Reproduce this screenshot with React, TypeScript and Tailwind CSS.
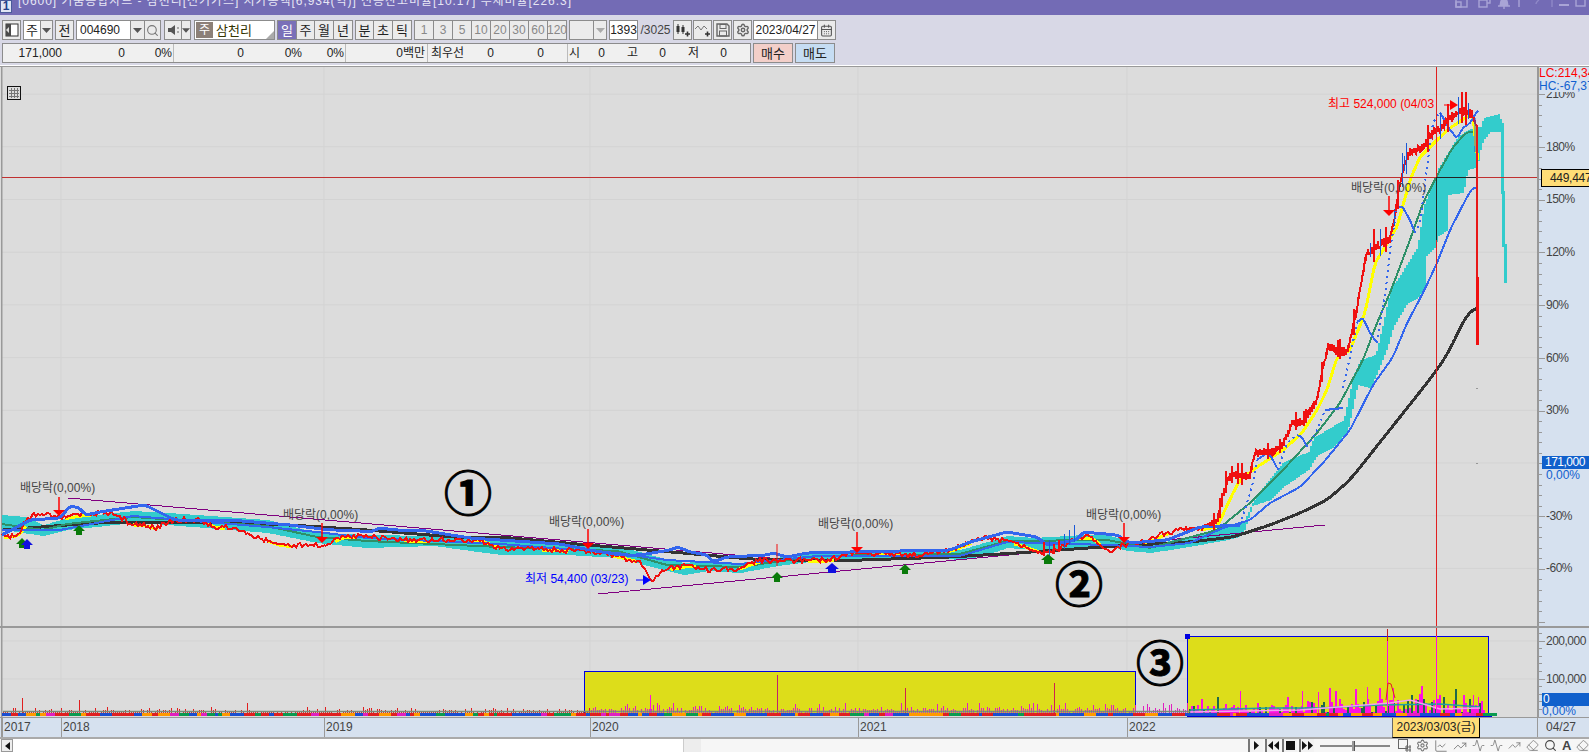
import type { ReactNode } from "react";
import { Search, Settings, LineChart, TrendingUp, Activity, Eraser, CalendarDays } from "lucide-react";

type P = [number, number];

const rnd = (i: number) => {
  const s = Math.sin(i * 12.9898) * 43758.5453;
  return s - Math.floor(s);
};

const at = (pts: P[], x: number) => {
  if (x <= pts[0][0]) return pts[0][1];
  for (let i = 1; i < pts.length; i++) {
    if (x <= pts[i][0]) {
      const [x0, y0] = pts[i - 1];
      const [x1, y1] = pts[i];
      return y0 + ((y1 - y0) * (x - x0)) / (x1 - x0 || 1);
    }
  }
  return pts[pts.length - 1][1];
};

const line = (pts: P[]) => pts.map((p) => p.join(",")).join(" ");

// resample key points and round the corners off
const smooth = (pts: P[], win = 4) => {
  const out: P[] = [];
  const last = pts[pts.length - 1][0];
  for (let x = pts[0][0]; x <= last; x += 2) {
    let sum = 0;
    for (let k = -win; k <= win; k++) sum += at(pts, Math.min(last, x + k));
    out.push([x, sum / (win * 2 + 1)]);
  }
  return out;
};

const priceKeys: P[] = [
  [2, 536], [12, 536], [20, 532], [25, 522], [35, 514], [50, 515], [60, 518], [80, 515], [100, 513], [115, 515], [125, 520], [130, 524],
  [145, 525], [155, 528], [175, 520], [200, 520], [215, 527], [230, 527], [245, 532], [265, 540], [280, 545], [300, 545], [325, 545],
  [340, 537], [370, 535], [380, 538], [400, 540], [420, 540], [480, 540], [500, 548], [590, 551], [610, 555], [625, 558], [640, 562],
  [650, 578], [652, 580], [660, 572], [670, 568], [690, 565], [710, 570], [735, 569], [760, 560], [780, 562], [800, 560], [830, 560],
  [850, 553], [880, 554], [920, 555], [950, 550], [970, 542], [985, 537], [1000, 540], [1020, 545], [1040, 552], [1050, 552], [1060, 548],
  [1075, 537], [1090, 537], [1100, 545], [1110, 550], [1120, 546], [1150, 540], [1165, 533], [1180, 530], [1200, 528], [1217, 522],
  [1227, 480], [1233, 475], [1250, 477], [1255, 453], [1273, 452], [1283, 445], [1292, 423], [1302, 423], [1317, 402], [1320, 383],
  [1328, 347], [1347, 353], [1355, 320], [1360, 290], [1367, 253], [1383, 243], [1390, 240], [1397, 203], [1403, 167], [1410, 153],
  [1423, 148], [1433, 133], [1442, 127], [1450, 118], [1463, 110], [1473, 115], [1476, 130],
];

const price: P[] = [];
for (let x = 2; x <= 1476; x += 2) {
  price.push([x, at(priceKeys, x) + (rnd(x) - 0.5) * (x > 1210 ? 8 : 5)]);
}

const yellowLeft = smooth(priceKeys.filter((p) => p[0] < 1205).map((p): P => [p[0] + 2, p[1] + 1]), 3);
const yellowRight = smooth([
  [1200, 530], [1217, 527], [1233, 493], [1240, 480], [1257, 467], [1283, 450], [1302, 433], [1317, 410], [1327, 390], [1337, 357], [1350, 350],
  [1365, 313], [1375, 263], [1385, 247], [1397, 227], [1410, 180], [1420, 157], [1437, 140], [1450, 128], [1473, 113], [1478, 167],
], 2);

const bandTop: P[] = [
  [2, 517], [25, 519], [43, 527], [67, 520], [133, 513], [167, 515], [267, 522], [317, 535], [367, 537], [433, 538], [500, 543], [567, 547],
  [617, 548], [667, 562], [683, 565], [707, 563], [740, 565], [777, 560], [817, 553], [933, 552], [960, 552], [983, 545], [1007, 538],
  [1033, 540], [1083, 537], [1107, 537], [1127, 543], [1150, 547], [1183, 540], [1227, 528], [1243, 523], [1252, 503], [1263, 487],
  [1283, 462], [1308, 452], [1313, 438], [1343, 420], [1353, 375], [1360, 360], [1375, 355], [1383, 322], [1390, 288], [1397, 280],
  [1417, 247], [1423, 207], [1437, 170], [1457, 137], [1467, 130], [1480, 127], [1483, 118], [1498, 114], [1502, 123],
];
const bandBottom: P[] = [
  [2, 527], [43, 533], [67, 527], [133, 520], [167, 522], [267, 530], [317, 540], [367, 545], [433, 543], [500, 552], [567, 552], [617, 555],
  [667, 568], [683, 572], [707, 568], [740, 570], [777, 563], [817, 558], [933, 555], [960, 557], [983, 553], [1007, 545], [1033, 547],
  [1083, 547], [1107, 543], [1127, 548], [1150, 550], [1183, 545], [1227, 537], [1243, 533], [1252, 506], [1270, 500], [1283, 487],
  [1308, 470], [1317, 455], [1333, 447], [1347, 432], [1357, 385], [1370, 388], [1375, 377], [1387, 347], [1393, 327], [1407, 303],
  [1417, 298], [1425, 287], [1425, 257], [1435, 247], [1437, 237], [1447, 230], [1448, 195], [1463, 193], [1467, 170], [1477, 167],
  [1480, 150], [1483, 140], [1490, 132], [1502, 132],
];

const stepped = (pts: P[], grow: number) => {
  const out: P[] = [];
  for (let x = 2; x < 1502; x += 2) {
    const y = Math.round(at(pts, x)) + (x < 1240 ? grow : 0);
    out.push([x, y], [x + 2, y]);
  }
  return out;
};

const cloud = [...stepped(bandTop, -2), ...stepped(bandBottom, 3).reverse()];

const greenKeys = smooth([
  [2, 524], [43, 530], [67, 524], [133, 517], [267, 526], [317, 537], [367, 541], [500, 547], [617, 551], [667, 565], [740, 567], [817, 556],
  [960, 554], [1007, 541], [1107, 540], [1150, 548], [1217, 530], [1250, 503], [1283, 470], [1317, 433], [1340, 403], [1363, 360],
  [1377, 323], [1390, 293], [1410, 240], [1423, 203], [1440, 170], [1453, 147], [1467, 132], [1477, 132],
], 3);

const blueLow = smooth([
  [2, 530], [60, 530], [133, 516], [267, 527], [317, 532], [367, 538], [500, 544], [617, 553], [667, 560], [740, 564], [817, 556], [960, 556],
  [1007, 542], [1107, 545], [1150, 547], [1190, 543], [1223, 528], [1250, 520], [1270, 503], [1300, 487], [1323, 463], [1350, 430], [1373, 385],
  [1393, 357], [1407, 323], [1423, 293], [1437, 263], [1450, 230], [1467, 197], [1473, 187], [1478, 188],
], 3);

const blackKeys = smooth([
  [3, 530], [67, 525], [113, 522], [167, 522], [233, 523], [290, 525], [367, 530], [467, 538], [500, 537], [588, 545], [683, 553], [750, 559],
  [833, 561], [950, 557], [1017, 553], [1117, 546], [1190, 542], [1233, 537], [1270, 525], [1300, 513], [1327, 500], [1350, 480], [1423, 388],
  [1437, 370], [1450, 350], [1467, 313], [1478, 307],
], 8);

const blueTop = smooth([
  [2, 535], [30, 520], [60, 518], [70, 506], [80, 508], [85, 515], [100, 512], [125, 508], [145, 505], [165, 515], [175, 520], [230, 520], [290, 525],
  [330, 530], [350, 530], [370, 532], [380, 528], [395, 530], [420, 530], [470, 538], [500, 540], [560, 544], [590, 550], [620, 555], [640, 555],
  [670, 550], [678, 547], [690, 552], [707, 555], [713, 562], [727, 557], [767, 555], [773, 553], [787, 557], [807, 553], [850, 552], [950, 550],
  [970, 542], [1007, 532], [1037, 537], [1047, 545], [1077, 540], [1083, 532], [1117, 535], [1130, 543], [1167, 540], [1200, 527], [1240, 525],
], 3);
const blueDots: P[][] = [
  [[1240, 525], [1252, 487], [1257, 460]],
  [[1278, 470], [1287, 443], [1297, 435]],
  [[1307, 447], [1317, 430], [1325, 410]],
  [[1343, 388], [1350, 357], [1357, 322]],
  [[1377, 343], [1382, 313], [1387, 280], [1390, 250], [1397, 208]],
  [[1415, 233], [1420, 223], [1427, 167], [1433, 123], [1440, 112]],
];
const blueArcs: P[][] = [
  [[1257, 460], [1267, 453], [1272, 458], [1278, 470]],
  [[1297, 435], [1302, 437], [1307, 447]],
  [[1325, 410], [1343, 408]],
  [[1357, 322], [1363, 318], [1370, 333], [1377, 343]],
  [[1397, 208], [1402, 206], [1410, 220], [1415, 233]],
  [[1440, 112], [1450, 130], [1457, 138], [1463, 128], [1470, 123], [1478, 110]],
];

const PURPLE = "#800080";

const spikes: { x: number; a: number; b: number; c: string }[] = [];
for (let x = 1210; x < 1476; x += 2) {
  const y = at(priceKeys, x);
  const big = rnd(x + 11) > 0.78;
  const h = big ? 8 + rnd(x + 7) * (x > 1340 ? 12 : 6) : 2 + rnd(x + 7) * 3;
  spikes.push({ x, a: y - h, b: y + h * 0.7, c: big && x > 1340 && rnd(x) > 0.45 ? "#1a58d8" : "#f01010" });
}
for (let x = 1044; x < 1075; x += 5) {
  const y = at(priceKeys, x);
  spikes.push({ x, a: y - 6 - rnd(x) * 8, b: y + 4, c: rnd(x) > 0.6 ? "#1a58d8" : "#f01010" });
}

const yearLines = [61, 324, 590, 858, 1127];
const pctLevels = [210, 180, 150, 120, 90, 60, 30, 0, -30, -60];
const pctY = (p: number) => 463 - p * 1.7567;

const Arrow = ({ x, y1, y2, color = "#ff0000" }: { x: number; y1: number; y2: number; color?: string }) => (
  <g>
    <line x1={x} y1={y1} x2={x} y2={y2} stroke={color} strokeWidth={1.5} />
    <polygon points={`${x - 6},${y2} ${x + 6},${y2} ${x},${y2 + 6}`} fill={color} />
  </g>
);

const UpMark = ({ x, y, color = "#0a7a0a", w = 5 }: { x: number; y: number; color?: string; w?: number }) => (
  <polygon
    points={`${x},${y - 5} ${x + w + 1},${y + 1} ${x + w - 2},${y + 1} ${x + w - 2},${y + 5} ${x - w + 2},${y + 5} ${x - w + 2},${y + 1} ${x - w - 1},${y + 1}`}
    fill={color}
  />
);

const MainChart = () => (
  <svg className="absolute inset-0" width={1537} height={559} viewBox="0 67 1537 559">
    {pctLevels.map((p) => (
      <line key={p} x1={2} x2={1537} y1={pctY(p)} y2={pctY(p)} stroke="#d3d3d3" />
    ))}
    {yearLines.map((x) => (
      <line key={x} x1={x} x2={x} y1={66} y2={626} stroke="#d3d3d3" />
    ))}
    <rect x={1} y={66} width={1.5} height={560} fill="#999" />

    <polygon points={line(cloud)} fill="#33cccc" shapeRendering="crispEdges" />
    <polyline points="1502,123 1502,192 1503,192 1503,245 1505,245 1505,283" fill="none" stroke="#33cccc" strokeWidth={3} shapeRendering="crispEdges" />

    <g shapeRendering="crispEdges" fill="none">
      <line x1={68} y1={498} x2={770} y2={558} stroke={PURPLE} strokeWidth={1} />
      <line x1={598} y1={594} x2={1325} y2={525} stroke={PURPLE} strokeWidth={1} />

      <polyline points={line(blackKeys)} stroke="#333" strokeWidth={3} />
      <polyline points={line(greenKeys)} stroke="#2e9068" strokeWidth={2} />
      <polyline points={line(yellowLeft)} stroke="#ffff00" strokeWidth={3} strokeDasharray="26 44" />
      <polyline points={line(yellowRight)} stroke="#ffff00" strokeWidth={3} />
      <polyline points={line(blueLow)} stroke="#3366ee" strokeWidth={2} />
      <polyline points={line(price)} stroke="#f01010" strokeWidth={2} />
      <polyline points={line(blueTop)} stroke="#3366ee" strokeWidth={3} />
      {blueArcs.map((a, i) => (
        <polyline key={i} points={line(smooth(a, 1))} stroke="#3366ee" strokeWidth={2} />
      ))}
      {blueDots.map((a, i) => (
        <polyline key={i} points={line(a)} stroke="#3366ee" strokeWidth={2} strokeDasharray="2 4" />
      ))}
    </g>
    {spikes.map((s) => (
      <line key={`${s.x}-${s.a}`} x1={s.x} x2={s.x} y1={s.a} y2={s.b} stroke={s.c} strokeWidth={s.c === "#f01010" ? 2 : 1} shapeRendering="crispEdges" />
    ))}
    <line x1={777} x2={777} y1={544} y2={566} stroke="#f01010" strokeWidth={1} />

    <line x1={1477} x2={1477} y1={125} y2={277} stroke="#e81818" strokeWidth={2} />
    <line x1={1477.5} x2={1477.5} y1={277} y2={345} stroke="#f01010" strokeWidth={3} />
    <line x1={1475} x2={1475} y1={118} y2={152} stroke="#1a58d8" strokeWidth={1} />
    <line x1={1477} x2={1477} y1={388} y2={389} stroke="#555" />
    <line x1={1477} x2={1477} y1={463} y2={464} stroke="#555" />

    <line x1={1436.5} x2={1436.5} y1={66} y2={626} stroke="#e02020" strokeWidth={1} shapeRendering="crispEdges" />
    <line x1={2} x2={1537} y1={177.5} y2={177.5} stroke="#c03030" strokeWidth={1} shapeRendering="crispEdges" />
    <line x1={1437} x2={1476} y1={177.5} y2={177.5} stroke="#222" strokeWidth={1} shapeRendering="crispEdges" />
    <line x1={1436.5} x2={1436.5} y1={177} y2={240} stroke="#222" strokeWidth={1} shapeRendering="crispEdges" />

    <Arrow x={59} y1={497} y2={510} />
    <Arrow x={322} y1={523} y2={537} />
    <Arrow x={588} y1={529} y2={543} />
    <Arrow x={857} y1={532} y2={547} />
    <Arrow x={1124} y1={523} y2={537} />
    <Arrow x={1389} y1={196} y2={210} />

    <UpMark x={22} y={543} />
    <UpMark x={27} y={544} color="#1010e0" />
    <UpMark x={79} y={530} />
    <UpMark x={777} y={577} />
    <UpMark x={832} y={568} color="#1010e0" w={6} />
    <UpMark x={905} y={569} />
    <UpMark x={1048} y={559} w={6} />

    <polygon points="1458,105 1450,100 1450,110" fill="#ff0000" />
    <line x1={1444} x2={1452} y1={105} y2={105} stroke="#ff0000" />
    <polygon points="651,580 643,575 643,585" fill="#0000ff" />
    <line x1={636} x2={645} y1={580} y2={580} stroke="#0000ff" />
  </svg>
);

const volColors = ["#1a4fd0", "#e02020", "#0a9a50", "#ff9900", "#e020c0", "#1a4fd0", "#e02020"];

const VolumeChart = () => {
  const stripes: { x: number; w: number; c: string }[] = [];
  let sx = 2;
  let si = 0;
  while (sx < 1484) {
    const w = 3 + Math.floor(rnd(si + 3) * 12);
    stripes.push({ x: sx, w, c: volColors[Math.floor(rnd(si) * volColors.length)] });
    sx += w;
    si++;
  }
  const bars: { x: number; h: number; c: string }[] = [];
  for (let x = 3; x < 1484; x += 2) {
    const inner = x > 1187;
    const max = inner ? (x > 1300 ? 18 : 11) : x > 590 ? 7 : 4;
    const h = rnd(x * 3) * max * (rnd(x + 1) > 0.7 ? 1.5 : 0.8);
    const c = inner ? (rnd(x + 9) > 0.75 ? "#1f6a4a" : "#ff10e0") : x > 590 ? "#e020c0" : "#e02020";
    bars.push({ x, h, c });
  }
  const tall: [number, number, string][] = [
    [22, 15, "#e02020"], [79, 13, "#e02020"], [247, 10, "#e02020"], [777, 38, "#c02070"], [905, 25, "#d02050"], [1054, 30, "#d02050"],
    [650, 18, "#ff10e0"], [1240, 22, "#ff10e0"], [1302, 22, "#ff10e0"], [1318, 21, "#ff10e0"], [1367, 26, "#ff10e0"], [1393, 25, "#ff10e0"],
    [1473, 18, "#ff10e0"], [1478, 16, "#ff10e0"],
  ];
  return (
    <svg className="absolute inset-0" width={1537} height={89} viewBox="0 628 1537 89">
      <line x1={2} x2={1537} y1={641} y2={641} stroke="#d3d3d3" />
      <line x1={2} x2={1537} y1={679} y2={679} stroke="#d3d3d3" />
      {yearLines.map((x) => (
        <line key={x} x1={x} x2={x} y1={628} y2={717} stroke="#d3d3d3" />
      ))}
      <rect x={1} y={628} width={1.5} height={89} fill="#999" />

      <rect x={584.5} y={671.5} width={551} height={44} fill="#dddd1a" stroke="#0000e0" />
      <rect x={1187.5} y={636.5} width={301} height={80} fill="#dddd1a" stroke="#0000e0" />
      <rect x={1185} y={634} width={5} height={5} fill="#0000e0" />
      <rect x={1486} y={714} width={6} height={4} fill="#0000e0" />

      {bars.map((b) => (
        <rect key={b.x} x={b.x} y={713 - b.h} width={b.x > 1187 ? 2 : 1} height={b.h} fill={b.c} shapeRendering="crispEdges" />
      ))}
      {tall.map(([x, h, c]) => (
        <rect key={x} x={x} y={713 - h} width={1} height={h} fill={c} shapeRendering="crispEdges" />
      ))}
      {stripes.map((s) => (
        <rect key={s.x} x={s.x} y={713} width={s.w} height={3} fill={s.c} shapeRendering="crispEdges" />
      ))}
      <line x1={3} x2={1190} y1={711.5} y2={711.5} stroke="#7a8a7a" strokeWidth={1.5} />
      <polyline points="1190,710 1270,708 1320,708 1380,705 1440,704 1480,707" fill="none" stroke="#20a0a0" strokeWidth={1.5} />
      <polyline points="1190,712 1300,710 1390,703 1410,700 1440,709 1480,708" fill="none" stroke="#f0a0f0" strokeWidth={1.5} />
      <rect x={1387} y={629} width={1} height={12} fill="#c02020" />
      <rect x={1387} y={641} width={1} height={72} fill="#ff10e0" />
      <polyline points="1386,700 1388,683 1391,684 1395,698" fill="none" stroke="#e02020" />
      <rect x={1436} y={628} width={1} height={8} fill="#e02020" />
      <rect x={1436} y={636} width={1} height={77} fill="#ff10e0" />
    </svg>
  );
};

const Badge = ({ className, children }: { className: string; children: string }) => (
  <div className={`absolute text-[48px] leading-[50px] font-bold text-black [-webkit-text-stroke:1px_black] ${className}`}>{children}</div>
);

const AxisLabel = ({ y, children }: { y: number; children: string }) => (
  <div className="absolute left-[7px] text-[12px] leading-[16px] tracking-[-0.5px] whitespace-nowrap text-[#444]" style={{ top: y - 8 }}>
    {children}
  </div>
);

const MainAxis = () => {
  const ticks: number[] = [];
  for (let y = pctY(210) - 21; y < 626; y += 10.55) ticks.push(y);
  return (
    <div className="relative w-[52px] h-full overflow-hidden bg-[#d6e1ef] border-l-2 border-[#999]">
      <svg className="absolute inset-0" width={52} height={559} viewBox="0 67 52 559">
        {ticks.map((y, i) => (
          <line key={y} x1={0} x2={(i + 3) % 5 === 0 ? 6 : 3} y1={Math.round(y) + 0.5} y2={Math.round(y) + 0.5} stroke="#999" />
        ))}
      </svg>
      {pctLevels.map((p) => (
        <AxisLabel key={p} y={pctY(p) - 67}>{`${p}%`}</AxisLabel>
      ))}
      <div className="absolute left-0 top-0 w-full h-[25px] bg-[#d6e1ef] text-[12px] leading-[13px] whitespace-nowrap">
        <div className="text-[#ff0000]">LC:214,34</div>
        <div className="text-[#1060d0]">HC:-67,37</div>
      </div>
      <div className="absolute left-[2px] top-[102px] w-[60px] h-[18px] bg-[#ffdd77] border border-black pl-[8px] text-[12px] leading-[16px] tracking-[-0.3px] text-[#222] whitespace-nowrap">
        449,447
      </div>
      <div className="absolute left-[3px] top-[389px] w-full h-[13px] bg-[#1060cc] pl-[3px] text-[12px] leading-[13px] tracking-[-0.5px] text-white">171,000</div>
      <div className="absolute left-[7px] top-[401px] text-[12px] leading-[14px] text-[#1060d0]">0,00%</div>
    </div>
  );
};

const VolumeAxis = () => {
  const ticks: number[] = [];
  for (let y = 633; y < 717; y += 7.6) ticks.push(y);
  return (
    <div className="relative w-[52px] h-full overflow-hidden bg-[#d6e1ef] border-l-2 border-[#999]">
      <svg className="absolute inset-0" width={52} height={89} viewBox="0 628 52 89">
        {ticks.map((y, i) => (
          <line key={y} x1={0} x2={i % 5 === 1 ? 6 : 3} y1={Math.round(y) + 0.5} y2={Math.round(y) + 0.5} stroke="#999" />
        ))}
      </svg>
      <AxisLabel y={13}>200,000</AxisLabel>
      <AxisLabel y={51}>100,000</AxisLabel>
      <div className="absolute left-[3px] top-[65px] w-full h-[13px] bg-[#1060cc] pl-[1px] text-[12px] leading-[13px] text-white">0</div>
      <div className="absolute left-[3px] top-[77px] text-[12px] leading-[12px] text-[#1060d0]">0,00%</div>
    </div>
  );
};

const DropArrow = ({ light = false }: { light?: boolean }) => (
  <svg width={9} height={5} viewBox="0 0 9 5">
    <polygon points="0,0 9,0 4.5,5" fill={light ? "#aaa" : "#555"} />
  </svg>
);

const Btn = ({ w, children, className = "bg-[#ebebeb] text-[#222]" }: { w: string; children?: ReactNode; className?: string }) => (
  <div className={`${w} h-[20px] shrink-0 flex items-center justify-center border border-[#8c8c8c] text-[12px] leading-none ${className}`}>
    {children}
  </div>
);

const Ko = ({ children }: { children: string }) => <span className="text-[13px]">{children}</span>;

const Toolbar = () => (
  <div className="h-[50px] shrink-0 bg-[#d8d8e6] pl-[2px] pt-[5px] flex flex-col gap-[3px]">
    <div className="flex items-center h-[20px] gap-[1px]">
      <Btn w="w-[19px]">
        <svg width={14} height={14} viewBox="0 0 14 14">
          <rect x={1} y={1} width={12} height={12} fill="#fff" stroke="#333" />
          <rect x={1} y={1} width={5} height={12} fill="#4a4a4a" />
          <polygon points="1,7 4,4 4,10" fill="#ddd" />
        </svg>
      </Btn>
      <div className="flex ml-[1px]">
        <Btn w="w-[18px]" className="bg-white text-[#222]"><Ko>주</Ko></Btn>
        <Btn w="w-[13px]" className="bg-[#ebebeb] -ml-px"><DropArrow /></Btn>
      </div>
      <Btn w="w-[19px]" className="bg-[#ebebeb] text-[#222] ml-[1px]"><Ko>전</Ko></Btn>
      <div className="flex ml-[1px]">
        <Btn w="w-[55px]" className="bg-white text-[#222] justify-start pl-[3px]">004690</Btn>
        <Btn w="w-[15px]" className="bg-[#ebebeb] -ml-px"><DropArrow /></Btn>
        <Btn w="w-[17px]" className="bg-[#ebebeb] -ml-px"><Search size={13} color="#777" strokeWidth={2} /></Btn>
      </div>
      <div className="flex ml-[2px]">
        <Btn w="w-[18px]">
          <svg width={13} height={12} viewBox="0 0 13 12">
            <polygon points="1,4 4,4 8,1 8,11 4,8 1,8" fill="#555" />
            <circle cx={11} cy={4} r={0.8} fill="#555" />
            <circle cx={11} cy={8} r={0.8} fill="#555" />
          </svg>
        </Btn>
        <Btn w="w-[10px]" className="bg-[#ebebeb] -ml-px"><DropArrow /></Btn>
      </div>
      <div className="relative ml-[2px] w-[81px] h-[20px] shrink-0 bg-white border border-[#8c8c8c] flex items-center">
        <div className="w-[17px] h-[16px] ml-[1px] bg-[#8c8078] text-white text-[12px] leading-[16px] text-center">주</div>
        <div className="ml-[3px] text-[13px] leading-none text-[#333300]">삼천리</div>
        <svg className="absolute right-0 bottom-0" width={8} height={8} viewBox="0 0 8 8">
          <polygon points="8,0 8,8 0,8" fill="#aaa" />
        </svg>
      </div>
      <div className="flex ml-[1px]">
        <Btn w="w-[20px]" className="bg-[#7a70b8] text-white"><Ko>일</Ko></Btn>
        <Btn w="w-[19px]" className="bg-[#ebebeb] text-[#222] -ml-px"><Ko>주</Ko></Btn>
        <Btn w="w-[20px]" className="bg-[#ebebeb] text-[#222] -ml-px"><Ko>월</Ko></Btn>
        <Btn w="w-[20px]" className="bg-[#ebebeb] text-[#222] -ml-px"><Ko>년</Ko></Btn>
      </div>
      <div className="flex ml-[1px]">
        <Btn w="w-[19px]" className="bg-[#ebebeb] text-[#222]"><Ko>분</Ko></Btn>
        <Btn w="w-[20px]" className="bg-[#ebebeb] text-[#222] -ml-px"><Ko>초</Ko></Btn>
        <Btn w="w-[20px]" className="bg-[#ebebeb] text-[#222] -ml-px"><Ko>틱</Ko></Btn>
      </div>
      <div className="flex ml-[1px]">
        <Btn w="w-[20px]" className="bg-[#ebebeb] text-[#888]">1</Btn>
        <Btn w="w-[20px]" className="bg-[#ebebeb] text-[#888] -ml-px">3</Btn>
        <Btn w="w-[20px]" className="bg-[#ebebeb] text-[#888] -ml-px">5</Btn>
        <Btn w="w-[20px]" className="bg-[#ebebeb] text-[#888] -ml-px">10</Btn>
        <Btn w="w-[20px]" className="bg-[#ebebeb] text-[#888] -ml-px">20</Btn>
        <Btn w="w-[20px]" className="bg-[#ebebeb] text-[#888] -ml-px">30</Btn>
        <Btn w="w-[20px]" className="bg-[#ebebeb] text-[#888] -ml-px">60</Btn>
        <Btn w="w-[20px]" className="bg-[#ebebeb] text-[#888] -ml-px">120</Btn>
      </div>
      <div className="flex ml-[1px]">
        <Btn w="w-[25px]" className="bg-[#ebebeb]" />
        <Btn w="w-[14px]" className="bg-[#ebebeb] -ml-px"><DropArrow light /></Btn>
      </div>
      <Btn w="w-[29px]" className="bg-white text-[#222] ml-[1px]">1393</Btn>
      <div className="w-[33px] shrink-0 text-[12px] leading-none text-[#444] text-center">/3025</div>
      <div className="flex gap-[1px]">
        <Btn w="w-[19px]">
          <svg width={15} height={13} viewBox="0 0 15 13">
            <path d="M3 0v10M8 1v9" stroke="#333" />
            <rect x={1.5} y={2} width={3} height={6} fill="#333" />
            <rect x={6.5} y={3} width={3} height={5} fill="#333" />
            <path d="M10 10h5M12.5 7.5v5" stroke="#333" strokeWidth={1.6} />
          </svg>
        </Btn>
        <Btn w="w-[19px]">
          <svg width={15} height={13} viewBox="0 0 15 13">
            <path d="M0 5l3-3 3 4 3-4 3 3" fill="none" stroke="#777" />
            <path d="M10 10h5M12.5 7.5v5" stroke="#333" strokeWidth={1.6} />
          </svg>
        </Btn>
        <Btn w="w-[19px]">
          <svg width={14} height={14} viewBox="0 0 14 14">
            <path d="M1 1h10l2 2v10H1z" fill="none" stroke="#666" strokeWidth={1.4} />
            <rect x={4} y={1.5} width={6} height={4} fill="none" stroke="#666" />
            <rect x={3.5} y={8} width={7} height={5} fill="none" stroke="#666" />
          </svg>
        </Btn>
        <Btn w="w-[19px]"><Settings size={14} color="#666" strokeWidth={2.4} /></Btn>
      </div>
      <div className="flex">
        <Btn w="w-[65px]" className="bg-white text-[#222]">2023/04/27</Btn>
        <Btn w="w-[19px]" className="bg-[#ebebeb] -ml-px"><CalendarDays size={13} color="#555" /></Btn>
      </div>
    </div>
    <div className="flex items-center h-[20px] gap-[2px]">
      <div className="w-[749px] h-[20px] shrink-0 flex bg-[#f0f0f0] border border-[#8c8c8c] text-[12px] leading-[18px] text-[#222] text-right">
        <div className="w-[59px]">171,000</div>
        <div className="w-[63px]">0</div>
        <div className="w-[47px]">0%</div>
        <div className="w-[2px] border-r border-[#bbb]" />
        <div className="w-[70px]">0</div>
        <div className="w-[58px]">0%</div>
        <div className="w-[42px]">0%</div>
        <div className="w-[2px] border-r border-[#bbb]" />
        <div className="w-[79px]">0백만</div>
        <div className="w-[3px] border-r border-[#bbb]" />
        <div className="w-[41px] text-left pl-[3px]">최우선</div>
        <div className="w-[25px]">0</div>
        <div className="w-[50px]">0</div>
        <div className="w-[24px] border-r border-[#bbb]" />
        <div className="w-[13px] text-center">시</div>
        <div className="w-[24px]">0</div>
        <div className="w-[33px]">고</div>
        <div className="w-[28px]">0</div>
        <div className="w-[33px]">저</div>
        <div className="w-[28px]">0</div>
      </div>
      <Btn w="w-[40px]" className="bg-[#f3cfc9] text-[#222]"><Ko>매수</Ko></Btn>
      <Btn w="w-[40px]" className="bg-[#c6ddf3] text-[#222]"><Ko>매도</Ko></Btn>
    </div>
  </div>
);

const TitleBar = () => (
  <div className="h-[15px] shrink-0 bg-[#736bb5] overflow-hidden flex items-start">
    <div className="w-[12px] h-[13px] bg-[#dfe4f4] border border-[#4a5a9a] text-[#24408a] text-[12px] leading-[11px] font-bold text-center shrink-0">1</div>
    <div className="ml-[6px] -mt-[7px] text-[12px] leading-[16px] tracking-[0.95px] text-[#e6e6f4] whitespace-nowrap">
      [0600] 키움종합차트 - 삼천리[전기가스] 시가총액[6,934(억)] 신용잔고비율[10.17] 부채비율[226.3]
    </div>
    <div className="ml-auto mr-[2px] -mt-[5px] h-[14px]">
      <svg width={132} height={14} viewBox="0 0 132 14" fill="none" stroke="#a9a4d6" strokeWidth={1.4}>
        <rect x={1} y={2} width={11} height={10} />
        <rect x={1} y={7} width={5} height={5} />
        <rect x={24} y={5} width={8} height={7} />
        <path d="M27 5V2h8v6h-3" />
        <path d="M43 11h12M45 11c1-3 0-7 4-8 4 1 3 5 4 8M49 11v3" fill="#a9a4d6" />
        <path d="M64 3v9M62 3h4" />
        <path d="M78 4c1-3 6-3 6 0 0 2-3 2-3 5" stroke="#8f88c8" />
        <path d="M97 0v12" stroke="#8f88c8" />
        <path d="M104 10h10" strokeWidth={2} />
        <rect x={121} y={3} width={9} height={8} />
      </svg>
    </div>
  </div>
);

const XAxis = () => (
  <div className="h-[20px] shrink-0 flex bg-[#d6e1ef] border-t border-[#999] text-[12px] leading-[19px] text-[#444]">
    <div className="relative w-[1537px] h-full">
      <div className="absolute left-[1px] top-0 w-[60px] h-full border-l-2 border-[#999] pl-[1px]">2017</div>
      <div className="absolute left-[61px] top-0 h-full border-l border-[#999] pl-[1px]">2018</div>
      <div className="absolute left-[324px] top-0 h-full border-l border-[#999] pl-[1px]">2019</div>
      <div className="absolute left-[590px] top-0 h-full border-l border-[#999] pl-[1px]">2020</div>
      <div className="absolute left-[858px] top-0 h-full border-l border-[#999] pl-[1px]">2021</div>
      <div className="absolute left-[1127px] top-0 h-full border-l border-[#999] pl-[1px]">2022</div>
      <div className="absolute left-[1392px] top-0 w-[88px] h-[20px] bg-[#ffdd77] border border-black border-t-0 border-l-[#666] text-center text-[#222] leading-[18px]">
        2023/03/03(금)
      </div>
    </div>
    <div className="flex-1 border-l border-[#999] pl-[8px]">04/27</div>
  </div>
);

const PlayBtn = ({ children }: { children: ReactNode }) => (
  <div className="w-[15px] h-[15px] flex items-center justify-center border-l-2 border-[#777] bg-[#f2f2f2] shrink-0">{children}</div>
);

const BottomBar = () => (
  <div className="h-[15px] shrink-0 flex items-center bg-[#f6f6f6] border-t-2 border-[#aaa] overflow-hidden">
    <div className="w-[12px] h-full ml-[1px] border border-[#999] bg-[#ededed] flex items-center justify-center shrink-0">
      <svg width={5} height={8} viewBox="0 0 5 8">
        <polygon points="5,0 5,8 0,4" fill="#111" />
      </svg>
    </div>
    <div className="w-[670px] h-full bg-white shrink-0" />
    <div className="w-[18px] h-full bg-[#ededed] border-l border-[#ccc] shrink-0" />
    <div className="w-[547px] h-full bg-[#f6f6f6] shrink-0" />
    <div className="flex h-full gap-[2px] items-center">
      <PlayBtn>
        <svg width={7} height={9} viewBox="0 0 7 9"><polygon points="1,0 6,4.5 1,9" fill="#111" /></svg>
      </PlayBtn>
      <PlayBtn>
        <svg width={11} height={9} viewBox="0 0 11 9"><polygon points="5,0 5,9 0,4.5" fill="#111" /><polygon points="11,0 11,9 6,4.5" fill="#111" /></svg>
      </PlayBtn>
      <PlayBtn>
        <svg width={9} height={9} viewBox="0 0 9 9"><rect width={9} height={9} fill="#111" /></svg>
      </PlayBtn>
      <PlayBtn>
        <svg width={11} height={9} viewBox="0 0 11 9"><polygon points="0,0 5,4.5 0,9" fill="#111" /><polygon points="6,0 11,4.5 6,9" fill="#111" /></svg>
      </PlayBtn>
    </div>
    <div className="relative w-[70px] h-[2px] ml-[6px] bg-[#888] shrink-0">
      <div className="absolute left-[32px] -top-[4px] w-[3px] h-[10px] bg-[#999] border-r border-[#555]" />
    </div>
    <div className="flex items-center gap-[5px] ml-[8px] text-[#777] shrink-0">
      <svg width={13} height={13} viewBox="0 0 13 13" fill="none" stroke="#666">
        <rect x={0.5} y={0.5} width={9} height={9} />
        <path d="M7 8h6M7 11h6M9 6v7M12 6v7" />
      </svg>
      <Settings size={13} strokeWidth={2} />
      <LineChart size={14} strokeWidth={1.5} />
      <TrendingUp size={14} strokeWidth={1.5} />
      <Activity size={13} strokeWidth={1.5} />
      <Activity size={13} strokeWidth={1.5} />
      <TrendingUp size={13} strokeWidth={1.5} />
      <Eraser size={13} strokeWidth={1.5} />
      <Search size={13} strokeWidth={2} color="#444" />
      <div className="text-[13px] leading-none font-bold text-[#444]">A</div>
      <Eraser size={13} strokeWidth={1.5} />
    </div>
  </div>
);

const App = () => {
  return (
    <div className="w-[1589px] h-[752px] overflow-hidden flex flex-col bg-[#d8d8e6] font-['Liberation_Sans','Noto_Sans_CJK_KR',sans-serif]">
      <TitleBar />
      <Toolbar />
      <div className="h-[1px] shrink-0 bg-white" />
      <div className="h-[560px] shrink-0 flex border-t border-[#999]">
        <div className="relative w-[1537px] h-full overflow-hidden bg-[#dcdcdc] text-[12px] leading-[16px] whitespace-nowrap text-[#444]">
          <MainChart />
          <svg className="absolute left-[7px] top-[19px]" width={14} height={14} viewBox="0 0 14 14">
            <rect x={0.5} y={0.5} width={13} height={13} fill="#ddd" stroke="#111" />
            <path d="M2 4.5h10M2 7.5h10M2 10.5h10M4.5 2v10M7.5 2v10M10.5 2v10" stroke="#777" />
          </svg>
          <div className="absolute left-[20px] top-[413px]">배당락(0,00%)</div>
          <div className="absolute left-[283px] top-[440px]">배당락(0,00%)</div>
          <div className="absolute left-[549px] top-[447px]">배당락(0,00%)</div>
          <div className="absolute left-[818px] top-[449px]">배당락(0,00%)</div>
          <div className="absolute left-[1086px] top-[440px]">배당락(0,00%)</div>
          <div className="absolute left-[1351px] top-[113px]">배당락(0,00%)</div>
          <div className="absolute left-[1328px] top-[29px] text-[#ff0000]">최고 524,000 (04/03</div>
          <div className="absolute left-[525px] top-[504px] text-[#0000ff]">최저 54,400 (03/23)</div>
          <Badge className="left-[444px] top-[403px]">①</Badge>
          <Badge className="left-[1055px] top-[494px]">②</Badge>
        </div>
        <MainAxis />
      </div>
      <div className="h-[2px] shrink-0 bg-[#999]" />
      <div className="h-[89px] shrink-0 flex">
        <div className="relative w-[1537px] h-full overflow-hidden bg-[#dcdcdc]">
          <VolumeChart />
          <Badge className="left-[1136px] top-[12px]">③</Badge>
        </div>
        <VolumeAxis />
      </div>
      <XAxis />
      <BottomBar />
    </div>
  );
};

export default App;
